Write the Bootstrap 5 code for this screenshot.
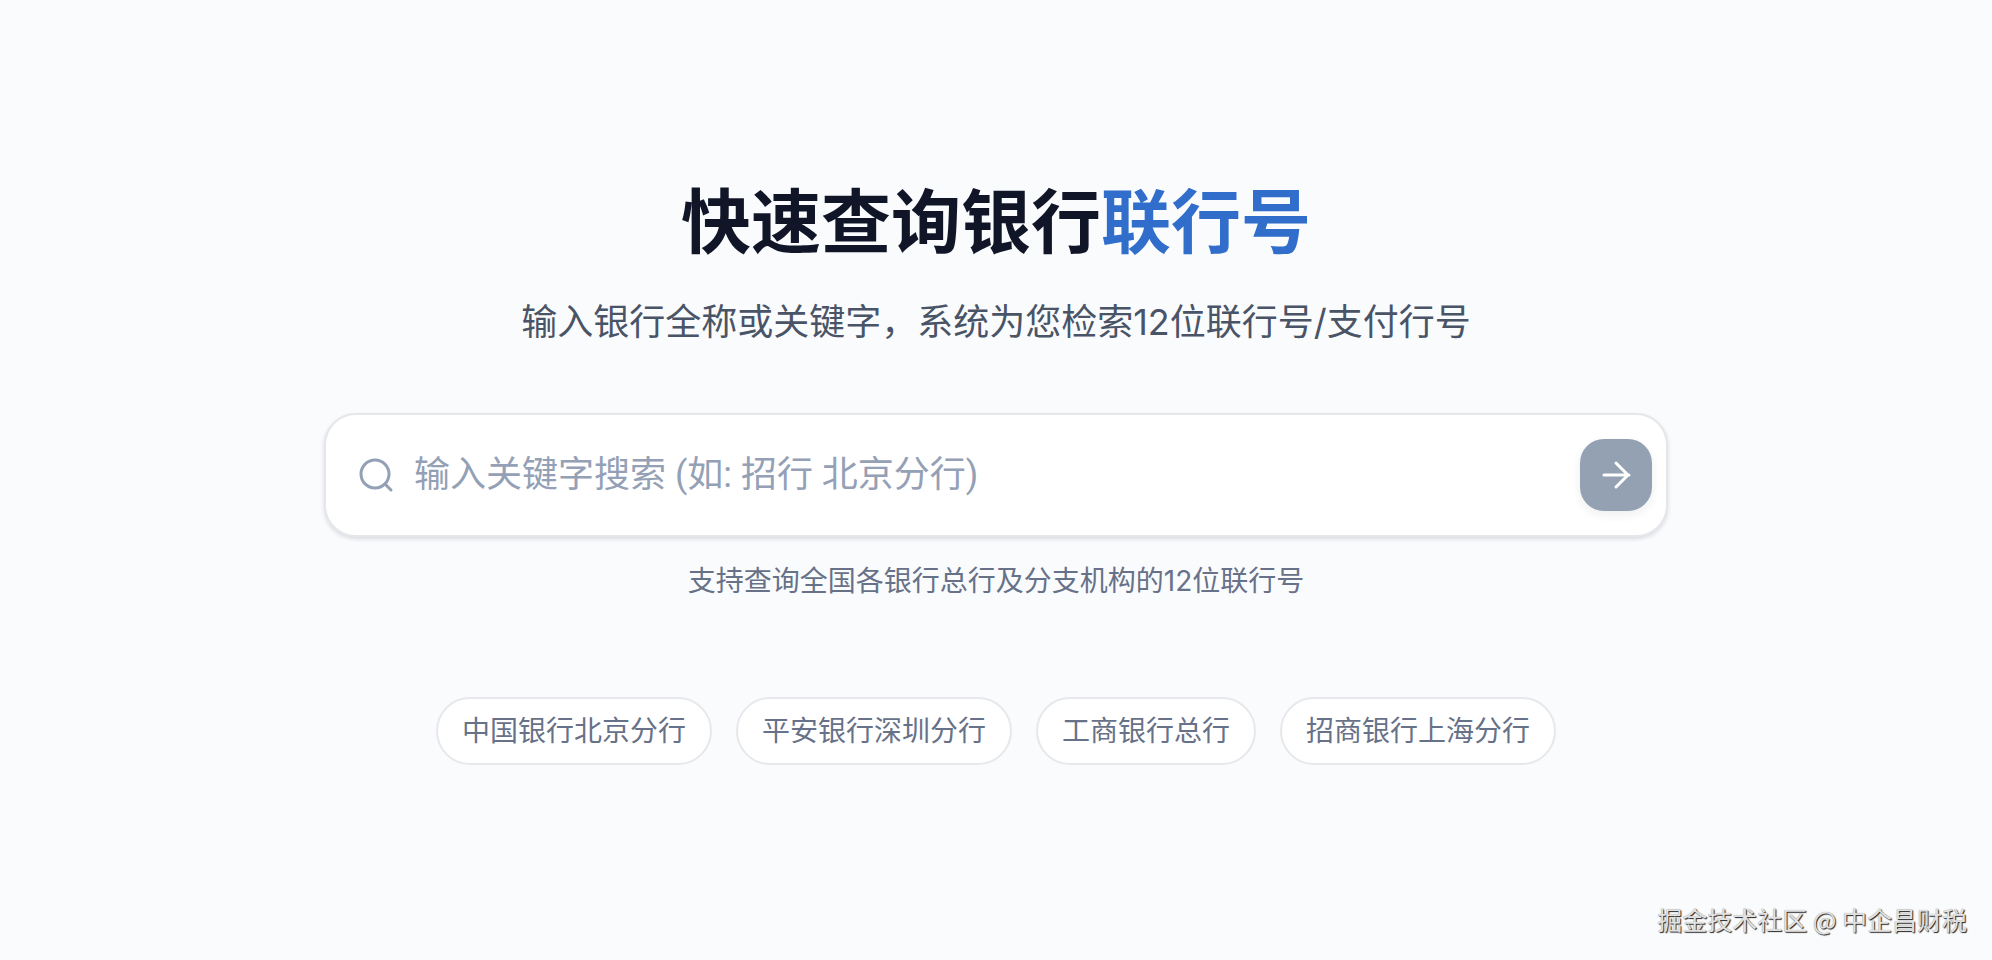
<!DOCTYPE html>
<html lang="zh-CN">
<head>
<meta charset="utf-8">
<meta name="viewport" content="width=device-width, initial-scale=1">
<title>联行号查询</title>
<link href="https://cdn.jsdelivr.net/npm/bootstrap@5.3.0/dist/css/bootstrap.min.css" rel="stylesheet">
<style>
body { background: #fafbfd; color: #4a5467; font-family: Inter, "Noto Sans CJK SC", sans-serif; }
.hero { padding-top: 175px; }
.hero-title { font-size: 70px; line-height: 96px; font-weight: 700; color: #101528; }
.hero-accent { color: #316ecb; }
.hero-sub { font-size: 36px; line-height: 54px; font-weight: 400; }
.search-wrap { width: 1344px; max-width: 100%; }
.search-box { height: 124px; border: 2px solid #e5e7ea; border-radius: 32px; box-shadow: 0 2px 4px rgba(15,23,42,.14); padding: 0 14px 0 32px; }
.search-box input { font-family: Roboto, "Noto Sans CJK SC", sans-serif; font-size: 36px; line-height: 56px; color: #4a5467; padding: 0 20px; }
.search-box input::placeholder { color: #94a0b5; opacity: 1; }
.go-btn, .go-btn:hover { width: 72px; height: 72px; border-radius: 24px; background: #94a1b2; box-shadow: 0 4px 10px rgba(15,23,42,.07); }
.hint { font-size: 28px; line-height: 40px; color: #677188; }
.chip { font-size: 28px; line-height: 40px; color: #677188; border: 2px solid #e6e8eb; padding: 12px 24px; }
.credit { font-size: 25px; line-height: 36px; color: #e2e2e2; text-shadow: 1px 1px 1px #222, 0 0 1px #999; padding: 0 25px 23px; font-family: "Noto Sans CJK SC", sans-serif; }
</style>
</head>
<body class="min-vh-100 d-flex flex-column">
<main class="hero flex-grow-1 d-flex flex-column align-items-center text-center px-3">
  <h1 class="hero-title mb-4">快速查询银行<span class="hero-accent">联行号</span></h1>
  <p class="hero-sub mb-5">输入银行全称或关键字，系统为您检索12位联行号/支付行号</p>
  <form class="search-wrap mt-3">
    <div class="search-box bg-white d-flex align-items-center">
      <svg class="flex-shrink-0" width="36" height="36" viewBox="0 0 36 36" fill="none" stroke="#94a0b5" stroke-width="3" stroke-linecap="round" aria-hidden="true"><circle cx="17" cy="17" r="14"/><path d="m27 27 6 6"/></svg>
      <input class="form-control border-0 shadow-none bg-transparent" type="text" aria-label="关键字" placeholder="输入关键字搜索 (如: 招行 北京分行)">
      <button class="go-btn btn border-0 p-0 flex-shrink-0" type="button" aria-label="搜索"><svg width="36" height="36" viewBox="0 0 36 36" fill="none" stroke="#fff" stroke-width="3" stroke-linecap="round" stroke-linejoin="round" aria-hidden="true"><path d="M6 18h25M18 6l12 12-12 12"/></svg></button>
    </div>
  </form>
  <p class="hint mt-4 mb-5">支持查询全国各银行总行及分支机构的12位联行号</p>
  <div class="d-flex flex-wrap justify-content-center gap-4 mt-5">
    <button type="button" class="chip bg-white rounded-pill">中国银行北京分行</button>
    <button type="button" class="chip bg-white rounded-pill">平安银行深圳分行</button>
    <button type="button" class="chip bg-white rounded-pill">工商银行总行</button>
    <button type="button" class="chip bg-white rounded-pill">招商银行上海分行</button>
  </div>
</main>
<footer class="credit text-end">掘金技术社区 @ 中企昌财税</footer>
<script src="https://cdn.jsdelivr.net/npm/bootstrap@5.3.0/dist/js/bootstrap.bundle.min.js"></script>
</body>
</html>
